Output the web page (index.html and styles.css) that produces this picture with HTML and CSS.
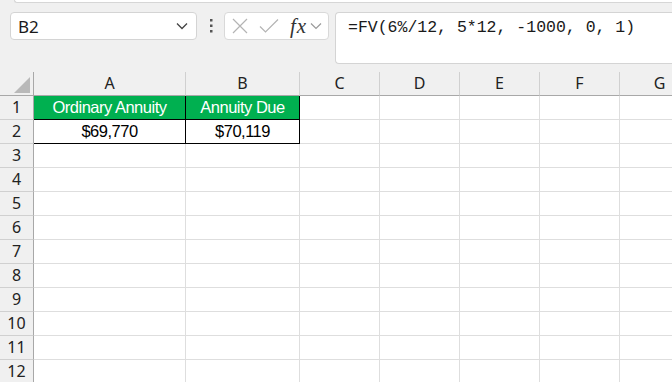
FILE: index.html
```html
<!DOCTYPE html>
<html lang="en">
<head>
    <meta charset="UTF-8">
    <title>FV - Annuity</title>
    <link rel="stylesheet" href="styles.css">
</head>
<body>
    <div class="topstrip"></div>
    <div class="toolbar">
        <div class="namebox">
            <span class="ref">B2</span>
            <svg class="chev" width="12" height="8" viewBox="0 0 12 8"><path d="M1 1.5 L6 6.5 L11 1.5" fill="none" stroke="#444" stroke-width="1.3"/></svg>
        </div>
        <div class="grip">
            <svg width="4" height="16" viewBox="0 0 4 16"><rect x="1" y="1" width="2.5" height="2.5" fill="#555"/><rect x="1" y="6.5" width="2.5" height="2.5" fill="#555"/><rect x="1" y="12" width="2.5" height="2.5" fill="#555"/></svg>
        </div>
        <div class="fbtns">
            <svg class="ico" width="18" height="16" viewBox="0 0 18 16"><path d="M2 1 L16 15 M16 1 L2 15" stroke="#b4b4b4" stroke-width="1.2" fill="none"/></svg>
            <svg class="ico" width="20" height="16" viewBox="0 0 20 16"><path d="M1 8.5 L6.5 14 L19 1.5" stroke="#b4b4b4" stroke-width="1.2" fill="none"/></svg>
            <span class="fx">fx</span>
            <svg class="chev2" width="12" height="8" viewBox="0 0 12 8"><path d="M1 1.5 L6 6.5 L11 1.5" fill="none" stroke="#9a9a9a" stroke-width="1.2"/></svg>
        </div>
        <div class="formula">=FV(6%/12, 5*12, -1000, 0, 1)</div>
    </div>

    <div class="sheet">
        <div class="hd corner"><span class="tri"></span></div>
        <div class="hd">A</div><div class="hd">B</div><div class="hd">C</div><div class="hd">D</div><div class="hd">E</div><div class="hd">F</div><div class="hd">G</div>

        <div class="rh">1</div>
        <div class="c title bl">Ordinary Annuity</div><div class="c title bl">Annuity Due</div>
        <div class="c"></div><div class="c"></div><div class="c"></div><div class="c"></div><div class="c"></div>

        <div class="rh">2</div>
        <div class="c val bl">$69,770</div><div class="c val bl">$70,119</div>
        <div class="c"></div><div class="c"></div><div class="c"></div><div class="c"></div><div class="c"></div>

        <div class="rh">3</div><div class="c"></div><div class="c"></div><div class="c"></div><div class="c"></div><div class="c"></div><div class="c"></div><div class="c"></div>
        <div class="rh">4</div><div class="c"></div><div class="c"></div><div class="c"></div><div class="c"></div><div class="c"></div><div class="c"></div><div class="c"></div>
        <div class="rh">5</div><div class="c"></div><div class="c"></div><div class="c"></div><div class="c"></div><div class="c"></div><div class="c"></div><div class="c"></div>
        <div class="rh">6</div><div class="c"></div><div class="c"></div><div class="c"></div><div class="c"></div><div class="c"></div><div class="c"></div><div class="c"></div>
        <div class="rh">7</div><div class="c"></div><div class="c"></div><div class="c"></div><div class="c"></div><div class="c"></div><div class="c"></div><div class="c"></div>
        <div class="rh">8</div><div class="c"></div><div class="c"></div><div class="c"></div><div class="c"></div><div class="c"></div><div class="c"></div><div class="c"></div>
        <div class="rh">9</div><div class="c"></div><div class="c"></div><div class="c"></div><div class="c"></div><div class="c"></div><div class="c"></div><div class="c"></div>
        <div class="rh">10</div><div class="c"></div><div class="c"></div><div class="c"></div><div class="c"></div><div class="c"></div><div class="c"></div><div class="c"></div>
        <div class="rh">11</div><div class="c"></div><div class="c"></div><div class="c"></div><div class="c"></div><div class="c"></div><div class="c"></div><div class="c"></div>
        <div class="rh">12</div><div class="c"></div><div class="c"></div><div class="c"></div><div class="c"></div><div class="c"></div><div class="c"></div><div class="c"></div>
    </div>
</body>
</html>
```

FILE: styles.css
```css
body {
    margin: 0;
    background-color: #f0f0f0;
    font-family: "Noto Sans", "Open Sans", sans-serif;
    overflow: hidden;
    width: 672px;
    height: 382px;
}
.topstrip {
    height: 2px;
    margin-left: 14px;
    background-color: #fff;
    border-bottom: 1px solid #d6d6d6;
    border-left: 1px solid #d6d6d6;
    border-bottom-left-radius: 4px;
}
.toolbar {
    display: flex;
    align-items: flex-start;
    padding: 9px 0 0 10px;
    height: 52px;
    margin-bottom: 8px;
}
.namebox {
    box-sizing: border-box;
    width: 187px;
    height: 28px;
    background: #fff;
    border: 1px solid #d4d4d4;
    border-radius: 4px;
    display: flex;
    align-items: center;
    padding: 0 8px 0 7px;
}
.ref {
    flex: 1;
    font-size: 17px;
    color: #1a1a1a;
}
.grip {
    width: 27px;
    height: 28px;
    display: flex;
    align-items: center;
    justify-content: center;
}
.fbtns {
    box-sizing: border-box;
    width: 105px;
    height: 28px;
    background: #fff;
    border: 1px solid #d9d9d9;
    border-radius: 4px;
    display: flex;
    align-items: center;
    padding-left: 6px;
}
.fbtns .ico {
    margin-right: 10px;
}
.fx {
    font-family: "Liberation Serif", "DejaVu Serif", serif;
    font-style: italic;
    font-size: 21px;
    color: #333;
    margin-left: 1px;
    letter-spacing: 1px;
}
.chev2 {
    margin-left: 3px;
}
.formula {
    box-sizing: border-box;
    margin-left: 6px;
    flex: 1;
    height: 52px;
    background: #fff;
    border: 1px solid #d4d4d4;
    border-right: none;
    border-radius: 4px 0 0 4px;
    font-family: "Liberation Mono", monospace;
    font-size: 16.5px;
    color: #1a1a1a;
    padding: 5px 0 0 12px;
    white-space: pre;
}
.sheet {
    display: grid;
    grid-template-columns: 34px 152px 114px 80px 80px 80px 80px 80px;
    grid-auto-rows: 24px;
    background: #fff;
}
.hd {
    box-sizing: border-box;
    background: #f0f0f0;
    border-right: 1px solid #d0d0d0;
    border-bottom: 1px solid #a8a8a8;
    font-size: 16px;
    color: #222;
    text-align: center;
    line-height: 23px;
}
.corner {
    position: relative;
    border-right: 1px solid #a8a8a8;
}
.tri {
    position: absolute;
    right: 3px;
    bottom: 2px;
    width: 0;
    height: 0;
    border-left: 16px solid transparent;
    border-bottom: 16px solid #b9b9b9;
}
.rh {
    box-sizing: border-box;
    background: #f0f0f0;
    border-right: 1px solid #a8a8a8;
    border-bottom: 1px solid #d0d0d0;
    font-size: 16px;
    color: #222;
    text-align: center;
    line-height: 23px;
}
.c {
    box-sizing: border-box;
    border-right: 1px solid #dedede;
    border-bottom: 1px solid #dedede;
    font-family: "Liberation Sans", Arial, sans-serif;
    font-size: 16.5px;
    letter-spacing: -0.5px;
    text-align: center;
    line-height: 23px;
}
.c.bl {
    border-right-color: #000;
    border-bottom-color: #000;
}
.title {
    background: #00b050;
    color: #fff;
}
.val {
    color: #000;
}
```
